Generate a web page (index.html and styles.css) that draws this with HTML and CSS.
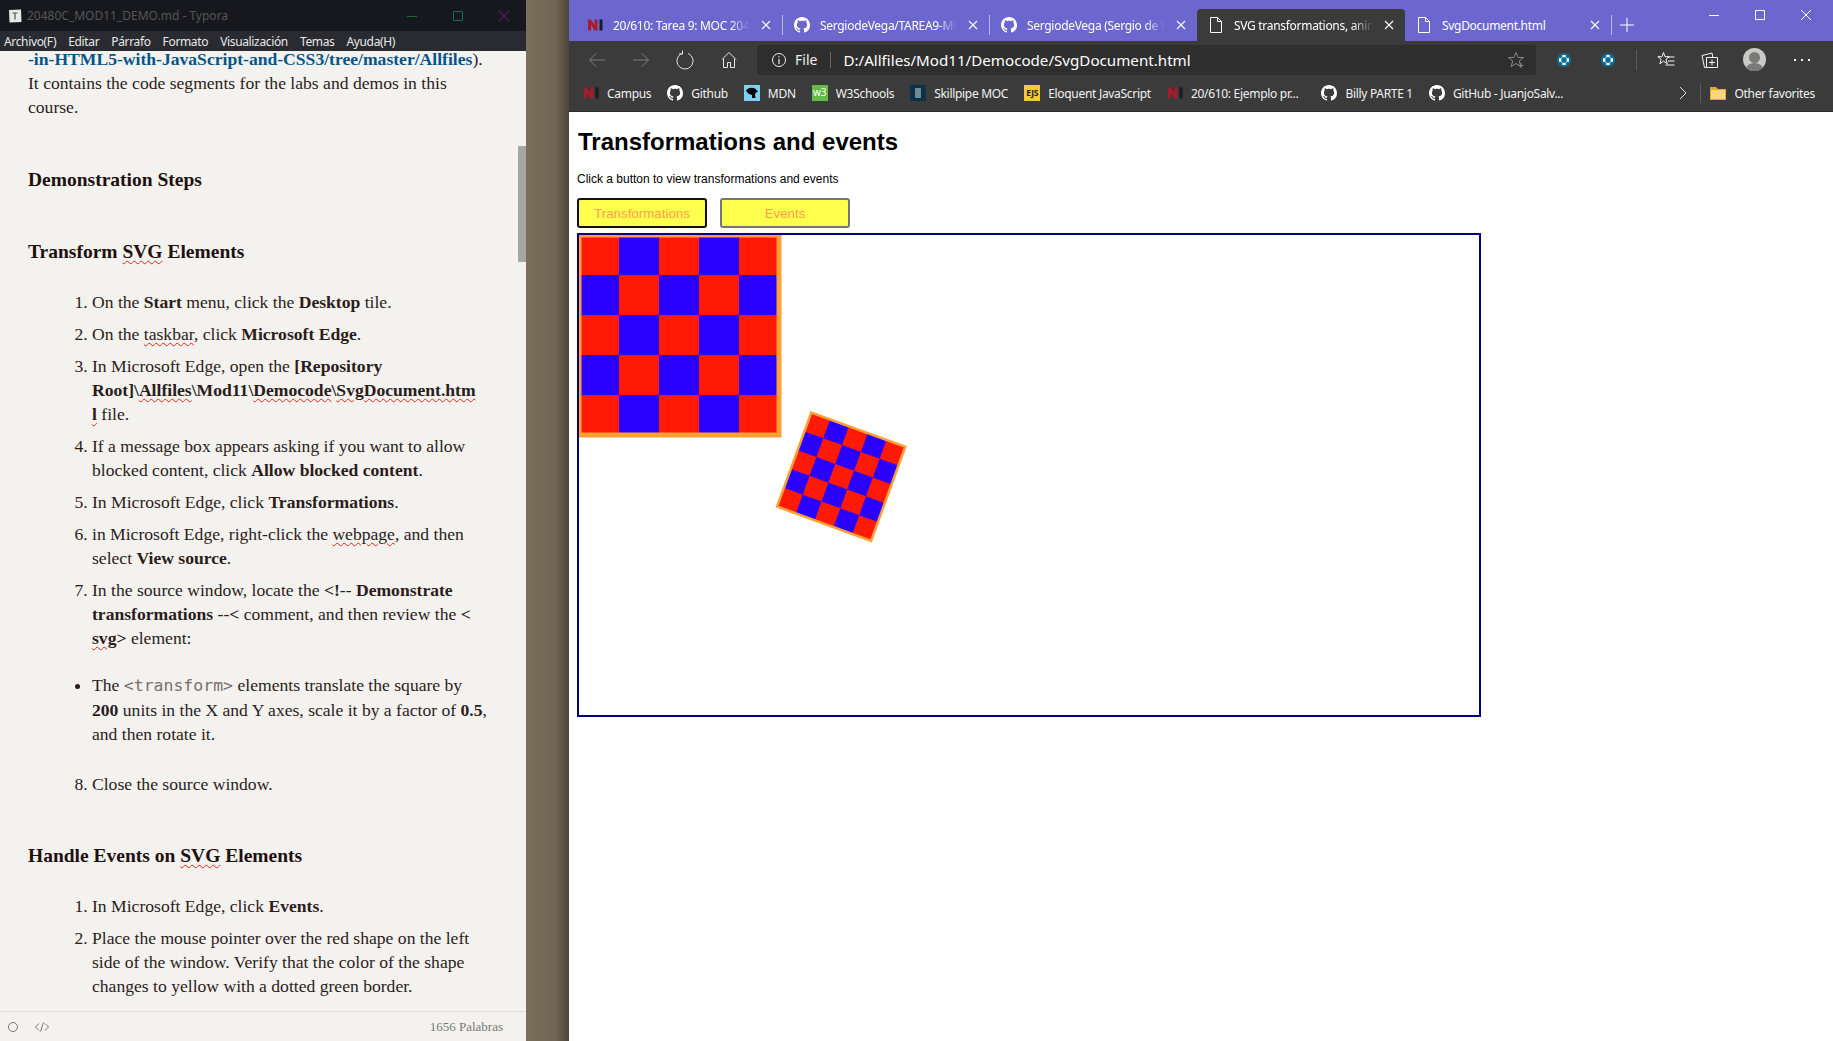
FILE: index.html
```html
<!DOCTYPE html>
<html lang="es">
<head>
<meta charset="utf-8">
<title>Typora and Edge</title>
<link rel="stylesheet" href="styles.css">
</head>
<body>
<svg class="defs" width="0" height="0" aria-hidden="true">
  <symbol id="gh" viewBox="0 0 16 16"><path fill="#fff" d="M8 0C3.58 0 0 3.58 0 8c0 3.54 2.29 6.53 5.47 7.59.4.07.55-.17.55-.38 0-.19-.01-.82-.01-1.49-2.01.37-2.53-.49-2.69-.94-.09-.23-.48-.94-.82-1.13-.28-.15-.68-.52-.01-.53.63-.01 1.08.58 1.23.82.72 1.21 1.87.87 2.33.66.07-.52.28-.87.51-1.07-1.78-.2-3.64-.89-3.64-3.95 0-.87.31-1.59.82-2.15-.08-.2-.36-1.02.08-2.12 0 0 .67-.21 2.2.82.64-.18 1.32-.27 2-.27s1.36.09 2 .27c1.53-1.04 2.2-.82 2.2-.82.44 1.1.16 1.92.08 2.12.51.56.82 1.27.82 2.15 0 3.07-1.87 3.75-3.65 3.95.29.25.54.73.54 1.48 0 1.07-.01 1.93-.01 2.2 0 .21.15.46.55.38A8.013 8.013 0 0016 8c0-4.42-3.58-8-8-8z"/></symbol>
  <symbol id="nlogo" viewBox="0 0 16 16"><path fill="#a81c2a" d="M1 2.500h3v11H1zM7.500 2.500h3v11h-3zM1 2.500h3l6.500 11h-3z"/><path fill="#1a1a28" d="M12.500 2.500h3v11h-3z"/></symbol>
  <symbol id="doc" viewBox="0 0 16 16"><path fill="none" stroke="#fff" stroke-width="1" d="M2.500.5h7l4 4v11h-11zM9.500.5v4h4"/></symbol>
  <symbol id="close" viewBox="0 0 10 10"><path fill="none" stroke="#fff" stroke-width="1.100" d="M1 1l8 8M9 1l-8 8"/></symbol>
  <symbol id="ext" viewBox="0 0 16 16"><circle cx="8" cy="8" r="7" fill="#0a6f93"/><path fill="#fff" d="M6.300 3h3.400v2.200h-3.400zM6.300 10.800h3.400V13h-3.400zM3 6.300h2.400v3.400H3zM10.600 6.300H13v3.400h-2.400z"/><path fill="#d8e8ee" d="M5.300 5.200h1v1h-1zM9.700 5.200h1v1h-1zM5.300 9.800h1v1h-1zM9.700 9.800h1v1h-1z"/></symbol>
</svg>

<section class="typora">
  <header class="ty-title">
    <svg class="ty-logo" width="14" height="14" viewBox="0 0 14 14"><path fill="#e8e8e8" d="M1 1l12-.5.5 12.500-12 .5z"/><path fill="none" stroke="#555" stroke-width="1.200" d="M4.500 4h5M7 4v6.500"/></svg>
    <span class="ty-name">20480C_MOD11_DEMO.md - Typora</span>
    <div class="ty-controls">
      <svg width="12" height="12" viewBox="0 0 12 12"><path stroke="#1c6b35" d="M1 6.500h10"/></svg>
      <svg width="12" height="12" viewBox="0 0 12 12"><path fill="none" stroke="#0f6b50" d="M1.500 1.500h9v9h-9z"/></svg>
      <svg width="12" height="12" viewBox="0 0 12 12"><path fill="none" stroke="#4b2556" stroke-width="1.200" d="M1 1l10 10M11 1L1 11"/></svg>
    </div>
  </header>
  <nav class="ty-menu">
    <span>Archivo(F)</span><span>Editar</span><span>Párrafo</span><span>Formato</span><span>Visualización</span><span>Temas</span><span>Ayuda(H)</span>
  </nav>
  <main class="ty-doc">
    <p class="intro"><span class="first"><a class="link">-in-HTML5-with-JavaScript-and-CSS3/tree/master/Allfiles</a>).</span>It contains the code segments for the labs and demos in this<br>course.</p>
    <h3 class="h-demo">Demonstration Steps</h3>
    <h3 class="h-sec">Transform <span class="sp">SVG</span> Elements</h3>
    <ol class="steps">
      <li>On the <b>Start</b> menu, click the <b>Desktop</b> tile.</li>
      <li>On the <span class="sp">taskbar</span>, click <b>Microsoft Edge</b>.</li>
      <li>In Microsoft Edge, open the <b>[Repository<br>Root]\<span class="sp">Allfiles</span>\Mod11\<span class="sp">Democode</span>\<span class="sp">SvgDocument.htm<br>l</span></b> file.</li>
      <li>If a message box appears asking if you want to allow<br>blocked content, click <b>Allow blocked content</b>.</li>
      <li>In Microsoft Edge, click <b>Transformations</b>.</li>
      <li>in Microsoft Edge, right-click the <span class="sp">webpage</span>, and then<br>select <b>View source</b>.</li>
      <li>In the source window, locate the <b>&lt;!</b>-- <b>Demonstrate<br>transformations</b> --<b>&lt;</b> comment, and then review the <b>&lt;<br><span class="sp">svg</span>&gt;</b> element:
        <ul class="notes">
          <li>The <code>&lt;transform&gt;</code> elements translate the square by<br><b>200</b> units in the X and Y axes, scale it by a factor of <b>0.5</b>,<br>and then rotate it.</li>
        </ul>
      </li>
      <li>Close the source window.</li>
    </ol>
    <h3 class="h-events">Handle Events on <span class="sp">SVG</span> Elements</h3>
    <ol class="steps">
      <li>In Microsoft Edge, click <b>Events</b>.</li>
      <li>Place the mouse pointer over the red shape on the left<br>side of the window. Verify that the color of the shape<br>changes to yellow with a dotted green border.</li>
    </ol>
    <div class="ty-scroll"></div>
  </main>
  <footer class="ty-status">
    <svg width="14" height="14" viewBox="0 0 14 14"><circle cx="7" cy="7" r="4.500" fill="none" stroke="#777"/></svg>
    <svg class="st-code" width="16" height="14" viewBox="0 0 16 14"><path fill="none" stroke="#777" d="M5 3.500L1.500 7 5 10.500M11 3.500L14.500 7 11 10.500M9.500 2.500l-3 9"/></svg>
    <span class="st-words">1656 Palabras</span>
  </footer>
</section>

<div class="desk"></div>

<section class="edge">
  <div class="tabstrip">
    <div class="tab"><svg class="tab-ic"><use href="#nlogo"/></svg><span class="tab-t">20/610: Tarea 9: MOC 2048</span><svg class="tab-x"><use href="#close"/></svg></div>
    <div class="tab-sep"></div>
    <div class="tab"><svg class="tab-ic"><use href="#gh"/></svg><span class="tab-t">SergiodeVega/TAREA9-MOC</span><svg class="tab-x"><use href="#close"/></svg></div>
    <div class="tab-sep"></div>
    <div class="tab tab-full"><svg class="tab-ic"><use href="#gh"/></svg><span class="tab-t">SergiodeVega (Sergio de V</span><svg class="tab-x"><use href="#close"/></svg></div>
    <div class="tab tab-active"><svg class="tab-ic"><use href="#doc"/></svg><span class="tab-t">SVG transformations, anim</span><svg class="tab-x"><use href="#close"/></svg></div>
    <div class="tab"><svg class="tab-ic"><use href="#doc"/></svg><span class="tab-t plain">SvgDocument.html</span><svg class="tab-x"><use href="#close"/></svg></div>
    <div class="tab-sep"></div>
    <svg class="tab-plus" width="14" height="14" viewBox="0 0 14 14"><path stroke="#fff" d="M7 0v14M0 7h14"/></svg>
    <div class="win">
      <svg width="12" height="12" viewBox="0 0 12 12"><path stroke="#fff" d="M1 6.500h10"/></svg>
      <svg width="12" height="12" viewBox="0 0 12 12"><path fill="none" stroke="#fff" d="M1.500 1.500h9v9h-9z"/></svg>
      <svg width="12" height="12" viewBox="0 0 12 12"><path fill="none" stroke="#fff" d="M1 1l10 10M11 1L1 11"/></svg>
    </div>
  </div>

  <div class="toolbar">
    <div class="tb"><svg width="18" height="18" viewBox="0 0 18 18"><path fill="none" stroke="#7c7c7c" d="M17 9H1.500M8.500 2l-7 7 7 7"/></svg></div>
    <div class="tb"><svg width="18" height="18" viewBox="0 0 18 18"><path fill="none" stroke="#7c7c7c" d="M1 9h15.500M9.500 2l7 7-7 7"/></svg></div>
    <div class="tb"><svg width="18" height="20" viewBox="0 0 18 20"><path fill="none" stroke="#e6e6e6" d="M6 3.500a8 8 0 1 0 6 0M6.500 .5v3.500H3"/></svg></div>
    <div class="tb"><svg width="16" height="18" viewBox="0 0 16 18"><path fill="none" stroke="#e6e6e6" d="M1 8.500L8 1.500l7 7M2.500 7.500v9h4v-5h3v5h4v-9"/></svg></div>
    <div class="addr">
      <svg width="16" height="16" viewBox="0 0 16 16"><circle cx="8" cy="8" r="6.500" fill="none" stroke="#eee"/><path stroke="#eee" stroke-width="1.200" d="M8 7v5M8 4.200v1.300"/></svg>
      <span class="addr-file">File</span>
      <span class="addr-sep"></span>
      <span class="addr-url">D:/Allfiles/Mod11/Democode/SvgDocument.html</span>
      <svg class="addr-star" width="18" height="18" viewBox="0 0 18 18"><path fill="none" stroke="#8a8a8a" d="M9 1.500l2.200 5h5.300l-4.200 3.500 1.500 5.500L9 12.500 4.200 15.500 5.700 10 1.500 6.500h5.300zM14 12v5M11.500 14.500h5"/></svg>
    </div>
    <div class="tb tb-first"><svg width="16" height="16"><use href="#ext"/></svg></div>
    <div class="tb"><svg width="16" height="16"><use href="#ext"/></svg></div>
    <div class="tb-sep"></div>
    <div class="tb"><svg width="18" height="18" viewBox="0 0 18 18"><path fill="none" stroke="#f4f4f4" d="M6.500 1.500l1.500 4.200h4.300L9 8.300l1.300 4.500-3.800-2.700-3.700 2.700L4.100 8.300.8 5.700h4.200zM10 6h7.500M11 10h6.500M8.500 14h9"/></svg></div>
    <div class="tb"><svg width="18" height="18" viewBox="0 0 18 18"><path fill="none" stroke="#f4f4f4" d="M5.500 16.500h-2L1 4.500l10-2.500.8 4M5.500 6.500h11v10h-11zM11 8.500v6M8 11.500h6"/></svg></div>
    <div class="tb"><div class="avatar"><span class="av-head"></span><span class="av-body"></span></div></div>
    <div class="tb tb-dots"><svg width="16" height="4" viewBox="0 0 16 4"><path fill="#f0f0f0" d="M0 1h2v2H0zM7 1h2v2H7zM14 1h2v2h-2z"/></svg></div>
  </div>

  <div class="bookmarks">
    <span class="bm"><svg class="bm-ic"><use href="#nlogo"/></svg>Campus</span>
    <span class="bm"><svg class="bm-ic"><use href="#gh"/></svg>Github</span>
    <span class="bm"><svg class="bm-ic" viewBox="0 0 16 16"><rect width="16" height="16" fill="#7cd0f2"/><path d="M2 6c1-3 6-4 9-2.500l3 3-2 1-1 2 .5 3.500H8V10L5 9 3.500 7.500z"/></svg>MDN</span>
    <span class="bm"><span class="bm-ic w3">w3</span>W3Schools</span>
    <span class="bm"><svg class="bm-ic" viewBox="0 0 16 16"><rect width="16" height="16" fill="#0d3147"/><rect x="5" y="3" width="6" height="10" rx="1" fill="#6f8a99"/></svg>Skillpipe MOC</span>
    <span class="bm"><span class="bm-ic ejs">EJS</span>Eloquent JavaScript</span>
    <span class="bm bm-long"><svg class="bm-ic"><use href="#nlogo"/></svg>20/610: Ejemplo pr...</span>
    <span class="bm"><svg class="bm-ic"><use href="#gh"/></svg>Billy PARTE 1</span>
    <span class="bm"><svg class="bm-ic"><use href="#gh"/></svg>GitHub - JuanjoSalv...</span>
    <svg class="bm-more" width="8" height="14" viewBox="0 0 8 14"><path fill="none" stroke="#ddd" d="M1 1l6 6-6 6"/></svg>
    <span class="bm-sep"></span>
    <span class="bm"><svg class="bm-ic" viewBox="0 0 16 16"><path fill="#e0a93c" d="M0 2h6l2 2h8v11H0z"/><path fill="#fbd67c" d="M1 5h14v9H1z"/></svg>Other favorites</span>
  </div>

  <div class="page">
    <h1>Transformations and events</h1>
    <p class="lead">Click a button to view transformations and events</p>
    <div class="btns">
      <button class="btn btn-focus" type="button">Transformations</button>
      <button class="btn" type="button">Events</button>
    </div>
    <svg class="canvas" width="900" height="480" viewBox="0 0 900 480">
      <defs>
        <g id="board">
          <rect width="200" height="200" fill="#ff1a06"/>
          <path fill="#2a00ff" d="M40 0h40v40H40zM120 0h40v40h-40zM0 40h40v40H0zM80 40h40v40H80zM160 40h40v40h-40zM40 80h40v40H40zM120 80h40v40h-40zM0 120h40v40H0zM80 120h40v40H80zM160 120h40v40h-40zM40 160h40v40H40zM120 160h40v40h-40z"/>
          <rect width="200" height="200" fill="none" stroke="#ffa033" stroke-width="5"/>
        </g>
      </defs>
      <use href="#board"/>
      <use href="#board" transform="translate(262.200 241.700) rotate(20) scale(.5) translate(-100 -100)"/>
    </svg>
  </div>
</section>
</body>
</html>
```

FILE: styles.css
```css
* { box-sizing: border-box; }
html, body { margin: 0; height: 100%; }
body {
  display: flex;
  width: 1833px;
  height: 1041px;
  overflow: hidden;
  font-family: "Noto Sans", sans-serif;
}
.defs { position: absolute; }

/* Typora window */
.typora {
  width: 526px;
  flex: none;
  display: flex;
  flex-direction: column;
  background: #f3f2ee;
  color: #2c1c1c;
}
.ty-title {
  height: 31px;
  flex: none;
  background: #16181d;
  display: flex;
  align-items: center;
  padding-left: 8px;
}
.ty-logo { margin-right: 5px; }
.ty-name { font-size: 12px; color: #565656; }
.ty-controls {
  margin-left: auto;
  margin-right: 16px;
  display: flex;
  gap: 34px;
}
.ty-menu {
  height: 20px;
  flex: none;
  background: #2a2b30;
  color: #e8e8e8;
  font-size: 12px;
  letter-spacing: -.35px;
  display: flex;
  align-items: center;
  gap: 12px;
  padding-left: 4px;
}
.ty-doc {
  flex: 1;
  position: relative;
  overflow: hidden;
  padding-left: 28px;
  font-family: "Liberation Serif", serif;
  font-size: 17.6px;
  line-height: 24px;
}
.intro { margin: 0 0 1px; }
.first { display: block; line-height: 17px; margin-bottom: 3px; }
.link { color: #065588; font-weight: bold; }
.ty-doc h3 { margin: 0; font-size: 19.500px; line-height: 30px; font-weight: bold; color: #1f1010; }
.h-demo { padding-top: 45px; }
.h-sec { padding-top: 42px; }
.h-events { padding-top: 45px; }
.steps { margin: 23px 0 0; padding: 0 0 0 64px; }
.steps > li { margin-bottom: 8px; }
.steps > li:last-child { margin-bottom: 0; }
.notes { margin: 23px 0 26px; padding: 0; list-style: disc; }
.sp { text-decoration: underline wavy #e2231a 1px; text-underline-offset: 2px; }
code {
  font-family: "DejaVu Sans Mono", monospace;
  font-size: 16.500px;
  color: #7a6f6f;
}
.ty-scroll {
  position: absolute;
  top: 95px;
  right: 0;
  width: 8px;
  height: 116px;
  background: #a6a7a3;
}
.ty-status {
  height: 30px;
  flex: none;
  border-top: 1px solid #dededc;
  display: flex;
  align-items: center;
  padding: 0 23px 0 6px;
  font-family: "Liberation Serif", serif;
  font-size: 13px;
  color: #777;
}
.st-code { margin-left: 14px; }
.st-words { margin-left: auto; }

.desk {
  width: 43px;
  flex: none;
  background: linear-gradient(90deg, #7a6f5b, #6f6552 70%, #4d4637);
}

/* Edge window */
.edge {
  flex: 1;
  min-width: 0;
  display: flex;
  flex-direction: column;
  background: #fff;
}
.tabstrip {
  height: 41px;
  flex: none;
  background: #6c66cf;
  display: flex;
  align-items: flex-end;
  padding-left: 7px;
  color: #fff;
  font-size: 12px;
  letter-spacing: -.3px;
}
.tab {
  width: 206px;
  height: 32px;
  flex: none;
  display: flex;
  align-items: center;
  padding: 0 10px 0 11px;
  gap: 10px;
}
.tab-full { width: 207px; }
.tab-active {
  width: 208px;
  background: #3b3b3b;
  border-radius: 4px 4px 0 0;
}
.tab-ic { width: 16px; height: 16px; flex: none; }
.tab-x { width: 12px; height: 12px; flex: none; padding: 1px; }
.tab-t {
  flex: 1;
  min-width: 0;
  white-space: nowrap;
  -webkit-mask-image: linear-gradient(90deg, #000 85%, transparent);
  mask-image: linear-gradient(90deg, #000 85%, transparent);
}
.tab-t.plain { -webkit-mask-image: none; mask-image: none; }
.tab-sep {
  width: 1px;
  height: 20px;
  flex: none;
  margin-bottom: 6px;
  background: #b9b6e8;
}
.tab-plus { margin: 0 0 9px 8px; flex: none; }
.win {
  margin-left: auto;
  align-self: flex-start;
  height: 30px;
  display: flex;
  padding-right: 4px;
}
.win svg { width: 46px; height: 30px; padding: 9px 17px; }

.toolbar {
  height: 37px;
  flex: none;
  background: #3b3b3b;
  display: flex;
  align-items: center;
  padding: 0 9px 0 6px;
  color: #eee;
}
.tb {
  width: 44px;
  height: 30px;
  flex: none;
  display: flex;
  align-items: center;
  justify-content: center;
}
.tb-first { margin-left: 6px; }
.tb-sep { width: 1px; height: 20px; background: #5a5a5a; margin: 0 7px 0 6px; flex: none; }
.tb-dots { margin-left: 4px; }
.addr {
  flex: 1;
  min-width: 0;
  margin-left: 6px;
  height: 30px;
  background: #2e2e2e;
  border-radius: 4px;
  display: flex;
  align-items: center;
  padding: 0 11px 0 14px;
}
.addr-file { margin-left: 8px; font-size: 14px; color: #eee; }
.addr-sep { width: 1px; height: 16px; background: #666; margin: 0 12px 0 13px; }
.addr-url { font-size: 15.150px; color: #fff; white-space: nowrap; }
.addr-star { margin-left: auto; }
.avatar {
  width: 23px;
  height: 23px;
  border-radius: 50%;
  background: #c9c9c6;
  position: relative;
  overflow: hidden;
}
.av-head { position: absolute; left: 6px; top: 4px; width: 11px; height: 11px; border-radius: 50%; background: #7a7a78; }
.av-body { position: absolute; left: 3px; top: 15px; width: 17px; height: 12px; border-radius: 50%; background: #7a7a78; }

.bookmarks {
  height: 34px;
  flex: none;
  background: #3b3b3b;
  border-bottom: 1px solid #2a2a2a;
  display: flex;
  align-items: center;
  gap: 16px;
  padding: 0 18px 3px 14px;
  font-size: 12px;
  letter-spacing: -.3px;
  color: #f2f2f2;
  white-space: nowrap;
}
.bm { display: flex; align-items: center; gap: 8px; }
.bm-long { margin-right: 7px; }
.bm-ic { width: 16px; height: 16px; flex: none; }
.w3 {
  background: #62bb46;
  color: #fff;
  font-size: 10px;
  line-height: 15px;
  letter-spacing: 0;
  text-align: center;
  overflow: hidden;
}
.ejs {
  background: #f5c93e;
  color: #222;
  font-size: 8.500px;
  font-weight: bold;
  line-height: 16px;
  letter-spacing: -.3px;
  text-align: center;
  overflow: hidden;
}
.bm-more { margin-left: auto; flex: none; }
.bm-sep { width: 1px; height: 20px; background: #5a5a5a; flex: none; margin-left: -3px; margin-right: -7px; }

/* Demo page */
.page {
  flex: 1;
  padding: 16px 8px 0;
  font-family: "Liberation Sans", sans-serif;
  color: #000;
}
.page h1 { margin: 0 0 0 1px; font-size: 24px; line-height: 28px; font-weight: bold; }
.lead { margin: 16px 0 12px; font-size: 12px; line-height: 14px; }
.btns { display: flex; gap: 13px; }
.btn {
  width: 130px;
  height: 30px;
  background: #ffff4d;
  color: #ffa04d;
  font-family: "Liberation Sans", sans-serif;
  font-size: 13.333px;
  border: 2px solid #767676;
  border-radius: 3px;
  padding: 0;
}
.btn-focus { border-color: #111; }
.canvas {
  display: block;
  width: 904px;
  height: 484px;
  margin-top: 5px;
  border: 2px solid #000080;
}
```
